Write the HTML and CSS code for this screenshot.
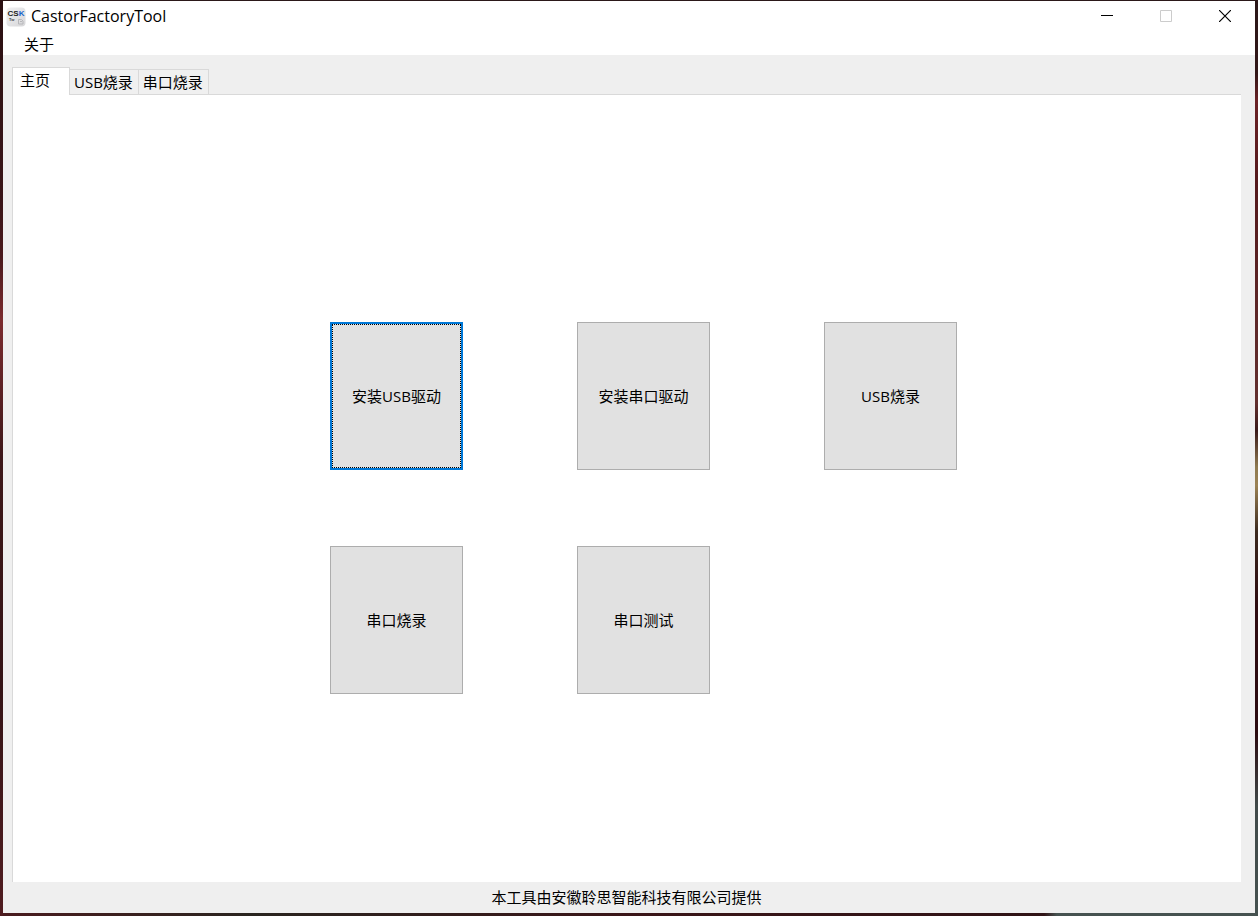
FILE: index.html
```html
<!DOCTYPE html>
<html lang="zh-CN">
<head>
<meta charset="utf-8">
<title>CastorFactoryTool</title>
<link rel="stylesheet" href="styles.css">
</head>
<body>
<div class="window">
  <header class="titlebar">
    <svg class="app-icon" viewBox="0 0 20 20" aria-hidden="true">
      <defs><linearGradient id="tile" x1="0" y1="0" x2="1" y2="1"><stop offset="0" stop-color="#f1f1f3"/><stop offset="1" stop-color="#d6d6d8"/></linearGradient></defs>
      <rect x="0.5" y="0.5" width="19" height="19" rx="4" fill="url(#tile)"/>
      <text class="logo-dark" x="1.5" y="9">CS<tspan class="logo-blue">K</tspan></text>
      <text class="logo-small" x="3" y="14">Tw</text>
      <path d="M12.5 12.5h3l1.500 1.500v3h-4.500zM14 14.500h2" fill="none" stroke="#b7b7ba"/>
    </svg>
    <h1 class="title">CastorFactoryTool</h1>
    <div class="controls">
      <button class="control" type="button" aria-label="最小化"><svg viewBox="0 0 12 12"><path d="M0 5.500h12" stroke="#000"/></svg></button>
      <button class="control" type="button" aria-label="最大化" disabled><svg viewBox="0 0 12 12"><path d="M.5.5h11v11H.5z" fill="none" stroke="#ccc"/></svg></button>
      <button class="control" type="button" aria-label="关闭"><svg viewBox="0 0 12 12"><path d="M0 0l12 12M12 0L0 12" stroke="#000" stroke-width="1.200"/></svg></button>
    </div>
  </header>
  <nav class="menubar"><button class="menu-item" type="button">关于</button></nav>
  <main class="content">
    <div class="tabs" role="tablist">
      <button class="tab tab-active" type="button" role="tab" id="tab-home" aria-controls="home" aria-selected="true">主页</button>
      <button class="tab" type="button" role="tab" aria-selected="false">USB烧录</button>
      <button class="tab" type="button" role="tab" aria-selected="false">串口烧录</button>
    </div>
    <section class="panel" id="home" role="tabpanel" aria-labelledby="tab-home">
      <div class="actions">
        <button class="action action-focused" type="button">安装USB驱动</button>
        <button class="action" type="button">安装串口驱动</button>
        <button class="action" type="button">USB烧录</button>
        <button class="action" type="button">串口烧录</button>
        <button class="action" type="button">串口测试</button>
      </div>
    </section>
  </main>
  <footer class="footer">本工具由安徽聆思智能科技有限公司提供</footer>
</div>
</body>
</html>
```
FILE: styles.css
```css
* { box-sizing: border-box; }

body {
  margin: 0;
  min-height: 100vh;
  padding: 1px 3px 3px;
  display: flex;
  font: 15px/20px "Open Sans", "Noto Sans CJK SC", sans-serif;
  color: #000;
  background:
    linear-gradient(#2b1718, #321718 8%, #6b2226 11%, #54191c 20%, #63302f 44%, #3a1a1a 47%, #8f7a50 51%, #9b8254 53%, #3c2a1f 58%, #2d0b10 66%, #2b0b10 80%, #414a4a 88%, #465250) right / 3px 100% no-repeat,
    linear-gradient(#2a1012, #3a1518 22%, #4a191c 28%, #7b2b2e 35%, #3d1719 50%, #351416 75%, #501c20) left / 3px 100% no-repeat,
    linear-gradient(90deg, #4a1b1e, #2a2520 20%, #3a1518 50%, #301416 83%, #465250 84%) bottom / 100% 3px no-repeat,
    #2b1819;
}

button {
  font: inherit;
  color: inherit;
  padding: 0;
  border: 0;
  background: none;
}

.window {
  flex: 1;
  display: flex;
  flex-direction: column;
  background: #efefef;
}

.titlebar {
  display: flex;
  align-items: center;
  height: 31px;
  padding: 0 1px 0 3px;
  background: #fff;
}

.app-icon { width: 20px; height: 20px; }
.logo-dark { font: bold 8px "Liberation Sans", sans-serif; fill: #222; }
.logo-blue { fill: #1764cc; }
.logo-small { font: bold 4px "Liberation Sans", sans-serif; fill: #444; }

.title {
  margin: 0;
  padding: 0 0 1px 5px;
  font-size: 16px;
  font-weight: 400;
}

.controls { display: flex; margin-left: auto; }

.control {
  display: flex;
  align-items: center;
  justify-content: center;
  width: 59px;
  height: 31px;
  padding-bottom: 1px;
}

.control svg { width: 12px; height: 12px; }

.menubar {
  display: flex;
  height: 23px;
  padding-left: 21px;
  background: #fff;
}

.content {
  flex: 1;
  display: flex;
  flex-direction: column;
  padding: 12px 14px 0 9px;
}

.tabs {
  display: flex;
  align-items: flex-end;
}

.tab {
  height: 25px;
  padding: 0 5px 1px 4px;
  border: 1px solid #d9d9d9;
  border-width: 1px 1px 0 0;
  background: #f0f0f0;
}

.tab-active {
  z-index: 1;
  width: 58px;
  height: 28px;
  margin-bottom: -1px;
  padding: 0 8px 3px 7px;
  border-left-width: 1px;
  background: #fff;
  text-align: left;
}

.panel {
  flex: 1;
  display: flex;
  align-items: center;
  justify-content: center;
  padding: 39px 0 0 33px;
  border: 1px solid #d9d9d9;
  border-width: 1px 0 0 1px;
  background: #fff;
}

.actions {
  display: grid;
  grid-template-columns: repeat(3, 133px);
  gap: 76px 114px;
}

.action {
  height: 148px;
  border: 1px solid #adadad;
  background: #e1e1e1;
}

.action-focused {
  border: 2px solid #0078d7;
  outline: 1px dotted #000;
  outline-offset: -3px;
}

.footer {
  height: 31px;
  padding: 0 14px 0 9px;
  line-height: 31px;
  text-align: center;
}
```
